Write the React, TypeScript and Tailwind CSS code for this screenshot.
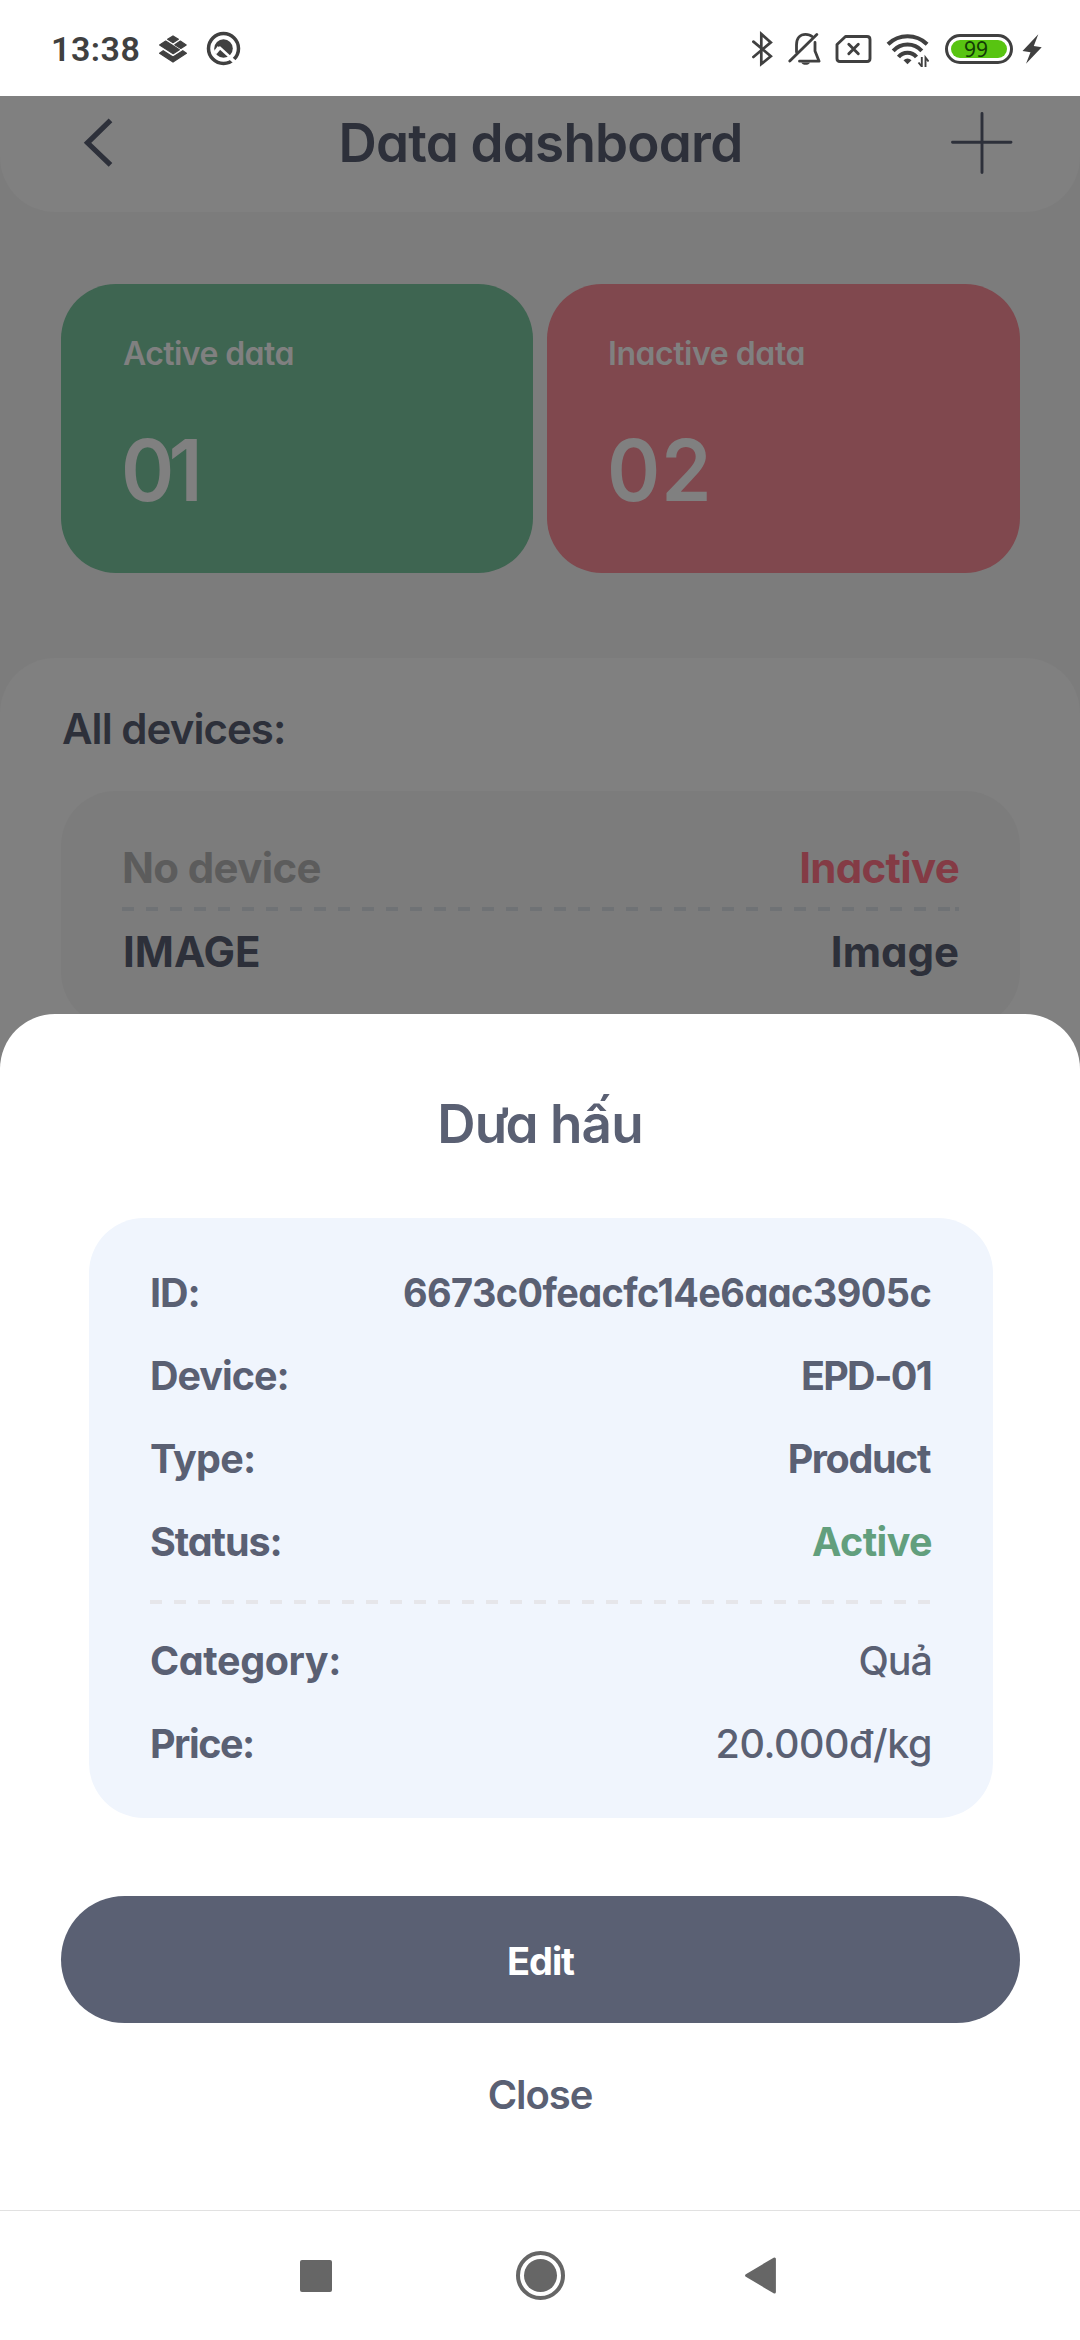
import type { ReactNode } from "react";

/* ---------- Status bar ---------- */

function StatusBar() {
  return (
    <div className="flex h-[96px] w-full items-center bg-white pt-px pl-[51px] font-['Roboto',sans-serif] text-[#404040]">
      <span className="w-[108px] text-[34px] leading-[40px] font-semibold tracking-[0.5px]">13:38</span>
      <svg className="h-[28px] w-[28px] shrink-0" viewBox="159 34.5 28 28" fill="currentColor" stroke="currentColor" strokeWidth="1.2" strokeLinejoin="round">
        <path d="M173 35.4 178.4 38.8 173 42.2 167.6 38.8Z" />
        <path d="M180.3 40.6 186.2 44.4 180.8 47.9 174.8 44.2Z" />
        <path d="M165.7 40.6 159.6 44.4 173.2 53.2 179.4 49.3Z" />
        <path d="M159.6 52.8 163.2 50.2 173 56.6 182.8 50.2 186.4 52.8 173 61.6Z" />
      </svg>
      <svg className="ml-[19px] h-[35px] w-[35px] shrink-0" viewBox="205.5 30.5 35 35" fill="none">
        <circle cx="223" cy="48" r="15" stroke="currentColor" strokeWidth="3.5" />
        <circle cx="223" cy="48" r="9.3" fill="currentColor" />
        <path d="M218.5 46.5 236.5 63" stroke="white" strokeWidth="2.6" />
        <path d="M212.8 51.5 217.3 45.6 220.3 48.4 216.2 53.4Z" fill="white" />
        <path d="M230 58 238.5 65.5" stroke="white" strokeWidth="3.2" />
      </svg>
      <svg className="ml-[511px] h-[36px] w-[21px] shrink-0" viewBox="751.5 30 21 36" fill="none" stroke="currentColor" strokeWidth="2.7" strokeLinecap="round">
        <path d="M752.9 40.6 770.3 55.2 760.8 63V33L770.3 41.4 752.9 56" />
      </svg>
      <svg className="ml-[15px] h-[36px] w-[34px] shrink-0" viewBox="787.5 30 34 36" fill="none" stroke="currentColor" strokeWidth="2.8" strokeLinecap="round">
        <path d="M796 51V44C796 37 800 33.3 805 33.3C808 33.3 810 34 811.6 35.6" />
        <path d="M814.5 41.5V50L818.6 60.2H799" strokeLinejoin="round" />
        <path d="M789.3 60 816.3 33.4" />
        <path d="M800.8 61.5H809.5C808.5 64.6 801.8 64.6 800.8 61.5Z" fill="currentColor" stroke="none" />
      </svg>
      <svg className="ml-[13px] h-[36px] w-[37px] shrink-0" viewBox="834.5 30 37 36" fill="none" stroke="currentColor" strokeWidth="2.9" strokeLinecap="round">
        <path d="M845 35.5H866.5Q869.5 35.5 869.5 38.5V57.5Q869.5 60.5 866.5 60.5H839.5Q836.5 60.5 836.5 57.5V43.5Z" strokeLinejoin="round" />
        <path d="M848.3 43.2 857.8 52.8M857.8 43.2 848.3 52.8" />
      </svg>
      <svg className="ml-[14px] h-[36px] w-[43px] shrink-0" viewBox="885.5 30 43 36" fill="none" stroke="currentColor" strokeWidth="4">
        <path d="M887.5 43.2A28 28 0 0 1 926.6 43.2" />
        <path d="M892.7 49.8A19.5 19.5 0 0 1 921.3 49.8" />
        <path d="M898 56A11.5 11.5 0 0 1 916 56" />
        <path d="M903 59.2Q907 55.8 911 59.2L907 63.2Z" fill="currentColor" stroke="none" />
        <path d="M921.3 56V65.5L918 61.5M925 66V56.5L928 60.5" strokeWidth="1.9" />
      </svg>
      <div className="ml-[16px] flex h-[30px] w-[68px] shrink-0 items-center justify-center rounded-full border-[3px] border-[#404040]">
        <div className="flex h-[18px] w-[56px] items-center justify-center rounded-full bg-[#58c411] pr-[6px] font-['Noto_Sans',sans-serif] text-[21px] leading-[18px] text-[#123c05]">99</div>
      </div>
      <svg className="ml-[9px] h-[30px] w-[21px] shrink-0" viewBox="1021.5 33 21 30" fill="currentColor">
        <path d="M1037.8 33.3 1022 50 1030 51.2 1025.5 62.8 1041.2 46.2 1033.3 45Z" />
      </svg>
    </div>
  );
}

/* ---------- Dimmed dashboard behind the sheet ---------- */

function StatCard({ className, label, labelClass, value, valueClass }: { className: string; label: string; labelClass: string; value: string; valueClass: string }) {
  return (
    <div className={"flex h-[289px] flex-col items-start rounded-[55px] pt-[49px] text-[#808080] " + className}>
      <span className={"text-[32px] leading-[41px] font-semibold whitespace-nowrap " + labelClass}>{label}</span>
      <span className={"mt-[52px] origin-left scale-x-95 text-[85px] leading-[90px] font-semibold " + valueClass}>{value}</span>
    </div>
  );
}

function Dashboard() {
  return (
    <div className="h-[973px] w-full overflow-hidden bg-[#7c7c7c] text-[#2d303a]">
      <header className="flex h-[116px] items-center rounded-b-[55px] bg-[#808080] pr-[67px] pb-[23px] pl-[83px]">
        <svg className="h-[50px] w-[32px] shrink-0" viewBox="0 0 32 50" fill="none" stroke="currentColor" strokeWidth="5.2">
          <path d="M27.5 2.3 4.5 24.8 27.5 46.8" />
        </svg>
        <h1 className="flex-1 pl-[15px] text-center text-[53px] leading-[60px] font-semibold tracking-[-0.8px]">Data dashboard</h1>
        <svg className="h-[62px] w-[62px] shrink-0" viewBox="0 0 62 62" fill="none" stroke="currentColor" strokeWidth="2.9" strokeLinecap="round">
          <path d="M31 1.5V60.5M1.5 30.2H60" />
        </svg>
      </header>

      <div className="mt-[72px] flex gap-[14px] pr-[60px] pl-[61px]">
        <StatCard className="w-[472px] bg-[#3e6551] pl-[62px]" label="Active data" labelClass="tracking-[-0.58px]" value="01" valueClass="-ml-[2px] tracking-[-6px]" />
        <StatCard className="w-[473px] bg-[#80484e] pl-[61px]" label="Inactive data" labelClass="tracking-[-0.45px]" value="02" valueClass="-ml-px tracking-[1px]" />
      </div>

      <section className="mt-[85px] h-[411px] rounded-t-[55px] bg-[#808080] pt-[46px] pr-[60px] pl-[62px]">
        <h2 className="text-[42px] leading-[50px] font-semibold tracking-[-0.95px]">All devices:</h2>
        <div className="mt-[37px] -ml-px h-[236px] rounded-[55px] bg-[#7c7c7c] px-[61px] pt-[51px] text-[42px] leading-[51px] font-bold">
          <div className="flex justify-between">
            <span className="tracking-[-0.65px] text-[#5c5c5c]">No device</span>
            <span className="tracking-[-0.69px] text-[#843b45]">Inactive</span>
          </div>
          <div className="mt-[14px] flex h-[4px] justify-between bg-[repeating-linear-gradient(90deg,#6f7275_0px,#6f7275_12px,transparent_12px,transparent_24px)]">
            <span />
            <span className="w-[4px] bg-[#6f7275]" />
          </div>
          <div className="mt-[15px] flex justify-between">
            <span className="ml-px">IMAGE</span>
            <span>Image</span>
          </div>
        </div>
      </section>
    </div>
  );
}

/* ---------- Bottom sheet ---------- */

/* Keeps the two-storey form for accented letters inside single-storey text. */
function Accent({ children }: { children: ReactNode }) {
  return <span className="[font-feature-settings:'cv11'_0]">{children}</span>;
}

function DetailRow({ label, labelClass, value, valueClass }: { label: string; labelClass: string; value: ReactNode; valueClass: string }) {
  return (
    <div className="flex h-[83px] items-center justify-between whitespace-nowrap">
      <span className={"font-bold " + labelClass}>{label}</span>
      <span className={valueClass}>{value}</span>
    </div>
  );
}

function Sheet() {
  return (
    <div className="-mt-[55px] flex h-[1196px] w-full flex-col rounded-t-[55px] bg-white pt-[80px] text-[#5a6073]">
      <h2 className="text-center text-[53px] leading-[61px] font-semibold tracking-[-0.9px]">
        Dưa h<Accent>ấ</Accent>u
      </h2>

      <div className="mt-[63px] mr-[87px] ml-[89px] rounded-[55px] bg-[#f0f5fd] px-[61px] py-[33px] text-[39.5px] leading-[50px]">
        <DetailRow label="ID:" labelClass="tracking-[-1px]" value="6673c0feacfc14e6aac3905c" valueClass="origin-right scale-x-[0.96] mr-px font-bold tracking-[-0.6px]" />
        <DetailRow label="Device:" labelClass="tracking-[-1px]" value="EPD-01" valueClass="mr-px font-bold tracking-[-1.7px]" />
        <DetailRow label="Type:" labelClass="tracking-[-0.8px]" value="Product" valueClass="mr-[2px] font-bold tracking-[-1.4px]" />
        <DetailRow label="Status:" labelClass="tracking-[-1.1px]" value="Active" valueClass="font-bold tracking-[-0.6px] text-[#629f7d]" />
        <div className="mt-[17px] mb-[15px] h-[4px] bg-[repeating-linear-gradient(90deg,#e6e6ea_0px,#e6e6ea_12px,transparent_12px,transparent_24px)]" />
        <DetailRow label="Category:" labelClass="tracking-[-0.4px]" value={<>Qu<Accent>ả</Accent></>} valueClass="font-medium tracking-[-1px]" />
        <DetailRow label="Price:" labelClass="tracking-[-1.5px]" value="20.000đ/kg" valueClass="font-medium tracking-[-0.45px]" />
      </div>

      <button className="mt-[78px] mr-[60px] ml-[61px] h-[127px] rounded-[64px] bg-[#5a6073] pt-[3px] text-center text-[38px] leading-[50px] font-bold tracking-[-1.11px] text-white">
        Edit
      </button>
      <button className="mt-[42px] self-center text-[40px] leading-[60px] font-semibold tracking-[-1.07px]">Close</button>
    </div>
  );
}

/* ---------- System navigation ---------- */

function NavBar() {
  return (
    <nav className="flex h-[130px] w-full items-center border-t border-[#e1e1e1] bg-white pl-[300px] text-[#666666]">
      <div className="h-[32px] w-[32px] rounded-[2px] bg-[#666666]" />
      <div className="ml-[184px] flex h-[49px] w-[49px] items-center justify-center rounded-full border-[4px] border-[#666666]">
        <div className="h-[33px] w-[33px] rounded-full bg-[#666666]" />
      </div>
      <svg className="ml-[180px] h-[37px] w-[31px]" viewBox="0 0 31 37" fill="currentColor" stroke="currentColor" strokeWidth="3" strokeLinejoin="round">
        <path d="M1.6 18.5 29.4 2V35Z" />
      </svg>
    </nav>
  );
}

export default function App() {
  return (
    <div className="flex h-[2340px] w-[1080px] flex-col overflow-hidden bg-white font-['Inter',sans-serif] [font-feature-settings:'cv11']">
      <StatusBar />
      <Dashboard />
      <Sheet />
      <NavBar />
    </div>
  );
}
